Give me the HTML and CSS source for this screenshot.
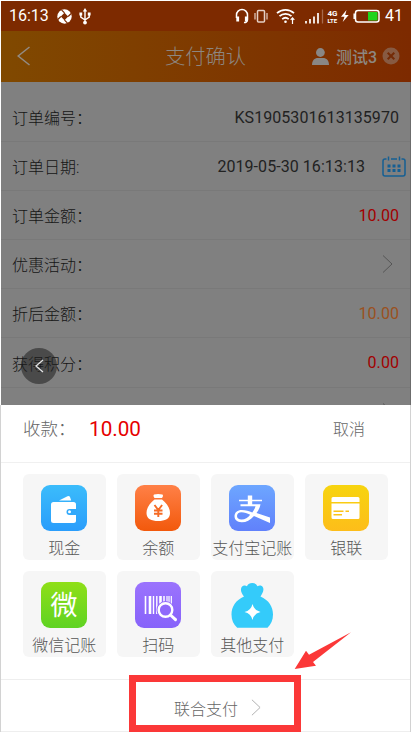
FILE: index.html
```html
<!DOCTYPE html>
<html lang="zh-CN">
<head>
<meta charset="utf-8">
<title>支付确认</title>
<link rel="stylesheet" href="styles.css">
</head>
<body>
<div class="phone">
  <div class="status">
    <span class="time">16:13</span>
    <svg class="st-app" width="15" height="15" viewBox="0 0 15 15"><circle cx="7.500" cy="7.500" r="7.200" fill="#fff"/><path d="M7.500 3.800 11.200 7.500 7.500 11.200 3.800 7.500z" fill="#7d2a00"/><path d="M7.500 3.800 4.500.8M11.200 7.500l3-3M7.500 11.200l3 3M3.800 7.500l-3 3" stroke="#7d2a00" stroke-width="1.200"/></svg>
    <svg class="st-usb" width="12" height="17" viewBox="0 0 12 17" fill="none" stroke="#fff" stroke-width="1.400"><path d="M6 2v12M1.800 6v3.200L6 12l4.200-2.800V6"/><g fill="#fff" stroke="none"><path d="M6 0 8.200 3.500H3.800zM.4 4.500h2.800v3H.4zM8.800 4.500h2.800v3H8.800z"/><circle cx="6" cy="14.600" r="1.900"/></g></svg>
    <svg class="st-right" width="146" height="18" viewBox="236 6 146 18" fill="none" stroke="#fff" stroke-width="1.500">
      <path d="M237.500 17v-3a5.500 5.500 0 0 1 11 0v4.500a3 3 0 0 1-3.500 3"/><path d="M238.700 15.500v5M247.300 15.500v5" stroke-width="2.800"/>
      <g stroke="#e5d0c5"><rect x="258.500" y="9.500" width="7" height="11.500" rx="1"/><path d="M256 12v6.500M268 12v6.500" stroke-width="1.200"/></g>
      <path d="M278 12.200a12.500 12.500 0 0 1 17 0M280.500 15.200a8.800 8.800 0 0 1 12 0M283.200 18.100a5 5 0 0 1 6.500 0" stroke-width="1.800"/><circle cx="286.500" cy="20.700" r="1.300" fill="#fff" stroke="none"/><path d="M293.500 23v-6M291.700 18.800l1.800-2 1.800 2" stroke-width="1.200"/>
      <path d="M307 22.500v-2.500M311 22.500v-4.500M315 22.500v-7M319 22.500v-10.500" stroke-width="1.700"/><path d="M323.500 22.500v-14" stroke="#a66a4d" stroke-width="1.300"/>
      <g fill="#fff" stroke="none" class="net"><text x="328.500" y="15">4G</text><text x="328.500" y="22" class="lte">LTE</text></g>
      <path d="M347.500 9l-5.500 6.700h3.500l-1.800 5.300 6-7h-3.500z" fill="#fff" stroke="none"/>
      <rect x="356.500" y="9.500" width="23.500" height="11.500" rx="2.500"/><path d="M355.200 12.500v5.500"/><path d="M369 11h9.500v8.500H369z" fill="#20d41c" stroke="none"/>
    </svg>
    <span class="battery">41</span>
  </div>

  <header class="header">
    <svg width="14" height="20" viewBox="0 0 14 20" fill="none" stroke="#928b83" stroke-width="1.500"><path d="M12.500 1 1.200 10l11.300 9"/></svg>
    <h1>支付确认</h1>
    <div class="user">
      <svg width="17" height="17" viewBox="0 0 17 17" fill="#898785"><circle cx="8.400" cy="4.500" r="4.400"/><path d="M0 17c0-4.500 2.500-7 6-7h5c3.500 0 6 2.500 6 7z"/></svg>
      <span class="name">测试3</span>
      <svg width="18" height="18" viewBox="0 0 18 18"><circle cx="9" cy="9" r="8.500" fill="#875a42"/><path d="M5.700 5.700l6.600 6.600M12.300 5.700l-6.600 6.600" stroke="#742a05" stroke-width="2"/></svg>
    </div>
  </header>

  <main class="rows">
    <div class="row"><span>订单编号：</span><span>KS1905301613135970</span></div>
    <div class="row date"><span>订单日期:</span><span>2019-05-30 16:13:13</span>
      <svg width="24" height="21" viewBox="0 0 24 21" fill="none" stroke="#155f93" stroke-width="1.500"><path d="M4.500 3H3a2 2 0 0 0-2 2v13a2 2 0 0 0 2 2h18a2 2 0 0 0 2-2V5a2 2 0 0 0-2-2h-1.500M9 3h6M6.500 .5v4M17.500 .5v4"/><path d="M5.500 10h13M5.500 14.500h13" stroke-width="3" stroke-dasharray="3 2"/></svg>
    </div>
    <div class="row"><span>订单金额：</span><span class="red">10.00</span></div>
    <div class="row"><span>优惠活动：</span><svg class="chev" width="11" height="18" viewBox="0 0 11 18"><path d="M1 .5l9 8.500-9 8.500"/></svg></div>
    <div class="row"><span>折后金额：</span><span class="orange">10.00</span></div>
    <div class="row"><span>获得积分：</span><span class="red">0.00</span></div>
    <div class="row"><span>打印模式：</span><svg class="chev" width="11" height="18" viewBox="0 0 11 18"><path d="M1 .5l9 8.500-9 8.500"/></svg></div>
    <div class="float-back"><svg width="9" height="14" viewBox="0 0 9 14" fill="none" stroke="#e4e4e4" stroke-width="1.300"><path d="M8 1 1 7l7 6"/></svg></div>
  </main>

  <section class="sheet">
    <div class="sheet-head"><span class="label">收款：</span><span class="amount">10.00</span><span class="cancel">取消</span></div>
    <div class="methods">
      <div class="tile">
        <svg class="icon" viewBox="0 0 46 46"><defs><linearGradient id="blue" x2="0" y2="1"><stop stop-color="#3bbcfb"/><stop offset="1" stop-color="#2a9dfb"/></linearGradient></defs><rect width="46" height="46" rx="9" fill="url(#blue)"/><path d="M18 15.500l8.500-4.200q1.800-.6 2.500.7l1.200 3.500z" fill="#fff"/><rect x="10" y="17" width="25" height="21" rx="2.500" fill="#fff"/><path d="M36 24h-7.500a3 3 0 0 0 0 6H36z" fill="#31a9fb"/><circle cx="28.500" cy="26.800" r="1.500" fill="#fff"/></svg>
        <span>现金</span></div>
      <div class="tile">
        <svg class="icon" viewBox="0 0 46 46"><defs><linearGradient id="orange" x2="0" y2="1"><stop stop-color="#ff8047"/><stop offset="1" stop-color="#f2590c"/></linearGradient></defs><rect width="46" height="46" rx="9" fill="url(#orange)"/><path d="M19 9.500q4-1 8.500 0 1.200 1.500-.5 3.500h-7.500q-1.800-2-.5-3.500zM19.500 14.500h7.500c5 4 8 8.500 8 13.500 0 6-5 8-11.800 8S11.500 34 11.500 28c0-5 3-9.500 8-13.500z" fill="#fff"/><path d="M19.500 20l3.800 5 3.800-5M19 25.500h8.500M19 28.800h8.500M23.300 25v7" fill="none" stroke="#f56b25" stroke-width="1.900"/></svg>
        <span>余额</span></div>
      <div class="tile">
        <svg class="icon" viewBox="0 0 46 46"><defs><linearGradient id="indigo" x2="0" y2="1"><stop stop-color="#6da6ff"/><stop offset="1" stop-color="#6181fb"/></linearGradient></defs><rect width="46" height="46" rx="9" fill="url(#indigo)"/><path d="M18.800 10.500h4.400v4.200h9.800v1.600h-9.800v3h8.300c-.8 4-2.300 6.500-4 8.800l13.500 4.500v5.500L25 31c-4 4.300-8 6.500-12.500 6.300-4.200-.2-7-2.500-7-6 0-4 3-6.300 7.300-6.300 4 0 7.200 1.300 10.500 2.500 1.500-1.800 2.500-4 3.200-6.300H11.500v-1.900h7.300v-3H10v-1.600h8.800zM12.500 27.300c-2.800 0-4.500 1.500-4.500 3.700s1.700 3.500 4.500 3.500c3.500 0 6.500-2 8.700-4.800-3-1.400-5.700-2.400-8.700-2.400z" fill="#fff"/></svg>
        <span>支付宝记账</span></div>
      <div class="tile">
        <svg class="icon" viewBox="0 0 46 46"><defs><linearGradient id="yellow" x2="0" y2="1"><stop stop-color="#f7d40f"/><stop offset="1" stop-color="#fdbd1a"/></linearGradient></defs><rect width="46" height="46" rx="9" fill="url(#yellow)"/><path d="M10 12h25a1.500 1.500 0 0 1 1.500 1.500V17h-28v-3.500A1.500 1.500 0 0 1 10 12zM8.500 18.500h28v14A1.500 1.500 0 0 1 35 34H10a1.500 1.500 0 0 1-1.500-1.500z" fill="#fff"/><path d="M10.500 26.300h10M22.500 26.300h3.500M10.500 29.800h8.500" stroke="#fbc318" stroke-width="1.600"/></svg>
        <span>银联</span></div>
      <div class="tile">
        <svg class="icon" viewBox="0 0 46 46"><defs><linearGradient id="green" x2="0" y2="1"><stop stop-color="#8fdf18"/><stop offset="1" stop-color="#5fd323"/></linearGradient></defs><rect width="46" height="46" rx="9" fill="url(#green)"/><text class="wei" x="23" y="33" text-anchor="middle">微</text></svg>
        <span>微信记账</span></div>
      <div class="tile">
        <svg class="icon" viewBox="0 0 46 46"><defs><linearGradient id="purple" x2="0" y2="1"><stop stop-color="#9b73fd"/><stop offset="1" stop-color="#8763fa"/></linearGradient></defs><rect width="46" height="46" rx="9" fill="url(#purple)"/><g stroke="#fff"><path d="M10.500 14v18" stroke-width="1.600"/><path d="M15 14v18" stroke-width="2.600"/><path d="M18.500 14v18M21.800 14v18" stroke-width="1.400"/><path d="M25.500 14v18" stroke-width="2.600"/><path d="M29 14v10" stroke-width="1.500"/><path d="M32 14v10M34 14v10M36.300 14v10" stroke-width="1.200"/></g><circle cx="30.500" cy="28" r="9" fill="#8f69fb"/><circle cx="30.500" cy="28" r="6.800" fill="#8f69fb" stroke="#fff" stroke-width="2.400"/><path d="M35.500 33l5 4.700" stroke="#fff" stroke-width="3" stroke-linecap="round"/></svg>
        <span>扫码</span></div>
      <div class="tile">
        <svg class="icon" viewBox="0 0 46 46"><path d="M15 14.500c-2-2.500-4-5.500-2.600-9 1.300-2.200 4-2.300 5.500-1.300Q19.500 1 23.200 1t5.300 3.200c2-1.300 4.500-.8 5.500 1.200 1.300 3.300-.7 6.300-2.500 9.100C39.500 18 44 24.500 44 32.500c0 5.500-2 10-5.500 13.300H8.200C4.500 42.500 2.500 38 2.500 32.500c0-8 4.500-14.500 12.500-18z" fill="#34cbfa"/><path d="M23.500 22q1.500 6.500 8 8-6.500 1.500-8 8-1.500-6.500-8-8 6.500-1.500 8-8z" fill="#fff"/></svg>
        <span>其他支付</span></div>
    </div>
    <div class="combined"><span>联合支付</span><svg class="chev light" width="10" height="17" viewBox="0 0 11 18"><path d="M1 .5l9 8.500-9 8.500"/></svg></div>
  </section>

  <div class="highlight"></div>
  <svg class="arrow" width="58" height="38" viewBox="294 631 58 38"><path d="M294.700 669 306 650.700l3 4L351 632.300 313 662l3 3.700z" fill="#fb3838"/></svg>
</div>
</body>
</html>
```

FILE: styles.css
```css
* { box-sizing: border-box; }

body {
  margin: 0;
  font-family: Roboto, "Noto Sans CJK SC", sans-serif;
  font-size: 16px;
  background: #fff;
}

svg { display: block; flex: none; }

.phone {
  position: relative;
  width: 411px;
  height: 732px;
  padding: 1px 0 0 1px;
  overflow: hidden;
  display: flex;
  flex-direction: column;
}

.status {
  height: 30px;
  flex: none;
  display: flex;
  align-items: center;
  background: #7d2a00;
  color: #fff;
  padding: 0 8px 0 8px;
}
.time { width: 40px; margin-top: -1px; }
.st-app { margin-left: 8px; }
.st-usb { margin-left: 7px; }
.st-right { margin-left: auto; }
.battery { margin: -1px 0 0 4px; }
.net { font: bold 8px Roboto, sans-serif; }
.lte { font-size: 6px; }

.header {
  position: relative;
  height: 51px;
  flex: none;
  display: flex;
  align-items: center;
  padding: 0 11px 1px 16px;
  background: linear-gradient(90deg, #804900, #7d2a00);
  color: #8d8780;
}
.header h1 {
  flex: 1;
  margin: 1px 0 0 134px;
  font-size: 20.300px;
  line-height: 28px;
  font-weight: 300;
}
.user { display: flex; align-items: center; }
.name { margin: 0 5px 0 7px; font-weight: 500; }

.rows {
  position: relative;
  flex: 1;
  padding-top: 11px;
  background: #808080;
  border-right: 1px solid #6c6c6c;
  overflow: hidden;
}
.row {
  height: 49.100px;
  display: flex;
  align-items: center;
  justify-content: space-between;
  padding: 0 11px;
  border-bottom: 1px solid #797979;
  color: #151515;
  font-weight: 300;
}
.row span + span { font-weight: 400; letter-spacing: .06px; color: #222; }
.date { padding-right: 4px; }
.date span + span { margin-left: auto; margin-right: 17px; }
.row .red { color: #a20000; }
.row .orange { color: #9a5120; }

.chev { fill: none; stroke: #555; stroke-width: 1; margin-right: 6px; }
.light { stroke: #aaa; margin: 0; }

.float-back {
  position: absolute;
  left: 20px;
  top: 266px;
  width: 36px;
  height: 36px;
  border-radius: 50%;
  background: rgba(30, 30, 30, .55);
  display: flex;
  align-items: center;
  justify-content: center;
}

.sheet {
  flex: none;
  height: 327px;
  background: #fff;
  border-left: 1px solid #d2d2d2;
  border-right: 1px solid #d2d2d2;
  margin-left: -1px;
  color: #666;
  font-weight: 300;
}
.sheet-head {
  height: 58px;
  display: flex;
  align-items: center;
  padding: 0 45px 11px 22px;
  border-bottom: 1px solid #f0f0f0;
}
.label { width: 66px; font-size: 17.500px; white-space: nowrap; margin-top: -1px; }
.amount { font-size: 20.700px; font-weight: 400; color: #e60000; margin-top: 1px; }
.cancel { margin: -1px 0 0 auto; }

.methods {
  display: grid;
  grid-template-columns: repeat(4, 82.500px);
  grid-auto-rows: 85.500px;
  gap: 11.500px;
  padding: 11px 22px 0;
  height: 216px;
}
.tile {
  display: flex;
  flex-direction: column;
  align-items: center;
  padding-top: 11px;
  border-radius: 6px;
  background: #f6f6f6;
  white-space: nowrap;
}
.tile span { margin-top: 6px; line-height: 24px; color: #555; }
.icon { width: 46px; height: 46px; margin-left: -1px; }
.wei { font: 400 27px "Noto Sans CJK SC", sans-serif; fill: #fff; }

.combined {
  height: 53px;
  display: flex;
  align-items: center;
  justify-content: center;
  gap: 13px;
  padding-top: 4px;
  padding-left: 24px;
  border-top: 1px solid #eee;
  border-bottom: 1px solid #eee;
}

.highlight {
  position: absolute;
  left: 129px;
  top: 675px;
  width: 172px;
  height: 57px;
  border: 7px solid #fb3838;
}
.arrow { position: absolute; left: 294px; top: 631px; }
```
